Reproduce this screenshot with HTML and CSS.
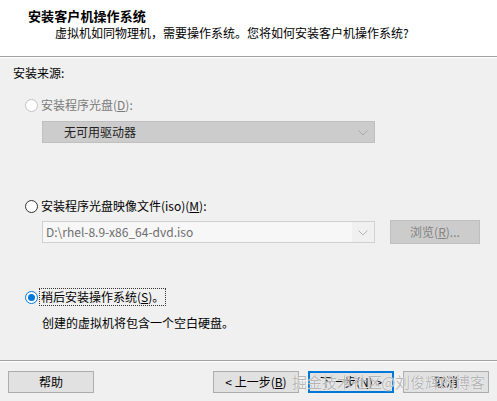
FILE: index.html
```html
<!DOCTYPE html>
<html lang="zh-CN">
<head>
<meta charset="utf-8">
<title>新建虚拟机向导</title>
<link rel="stylesheet" href="styles.css">
</head>
<body>
<div class="wizard">
  <div class="header">
    <div class="title">安装客户机操作系统</div>
    <div class="subtitle">虚拟机如同物理机，需要操作系统。您将如何安装客户机操作系统?</div>
  </div>
  <div class="sep"></div>
  <div class="content">
    <div class="section-label">安装来源:</div>

    <div class="option option-disc disabled">
      <span class="radio"></span>
      <span class="opt-text">安装程序光盘(<u>D</u>):</span>
    </div>
    <div class="select select-disabled">
      <span class="select-text">无可用驱动器</span>
      <span class="chev"><svg width="10" height="6" viewBox="0 0 10 6"><path d="M0.5 0.5 L5 5 L9.5 0.5" fill="none" stroke="#a8a8a8" stroke-width="1"/></svg></span>
    </div>

    <div class="option option-iso">
      <span class="radio"></span>
      <span class="opt-text">安装程序光盘映像文件(iso)(<u>M</u>):</span>
    </div>
    <div class="iso-row">
      <div class="select select-iso">
        <span class="select-text iso-text">D:\rhel-8.9-x86_64-dvd.iso</span>
        <span class="chev"><svg width="10" height="6" viewBox="0 0 10 6"><path d="M0.5 0.5 L5 5 L9.5 0.5" fill="none" stroke="#b4b4b4" stroke-width="1"/></svg></span>
      </div>
      <div class="btn btn-disabled">浏览(<u>R</u>)...</div>
    </div>

    <div class="option option-later">
      <span class="radio checked"></span>
      <span class="opt-text focus">稍后安装操作系统(<u>S</u>)。</span>
    </div>
    <div class="desc">创建的虚拟机将包含一个空白硬盘。</div>
  </div>
  <div class="sep"></div>
  <div class="footer">
    <div class="btn">帮助</div>
    <div class="nav">
      <div class="btn">&lt; 上一步(<u>B</u>)</div>
      <div class="btn btn-default">下一步(<u>N</u>) &gt;</div>
      <div class="btn">取消</div>
    </div>
    <div class="watermark">掘金技术社区 @ 刘俊辉的博客</div>
  </div>
</div>
</body>
</html>
```

FILE: styles.css
```css
* { box-sizing: border-box; }
html, body { margin: 0; padding: 0; }
body {
  width: 497px;
  height: 401px;
  overflow: hidden;
  background: #f0f0f0;
  font-family: "Noto Sans CJK SC", "Microsoft YaHei", sans-serif;
  font-size: 12px;
  line-height: 16px;
  color: #000;
}
u { text-decoration: underline; text-underline-offset: 1px; }

.wizard { width: 497px; height: 401px; }

.header {
  height: 56px;
  background: #fff;
  padding: 7px 0 0 28px;
}
.title { font-size: 13px; font-weight: bold; line-height: 17px; letter-spacing: 0.1px; }
.subtitle { padding-left: 27px; line-height: 17px; }

.sep {
  height: 2px;
  border-top: 1px solid #a0a0a0;
  border-bottom: 1px solid #ffffff;
}

.content {
  height: 302px;
  padding: 7px 0 0 13px;
}
.section-label { line-height: 16px; }

.option {
  display: flex;
  align-items: center;
  height: 16px;
  padding-left: 12px;
}
.option-disc { margin-top: 16px; }
.option-iso { margin-top: 55px; }
.option-later { margin-top: 45px; }

.radio {
  width: 13px;
  height: 13px;
  border-radius: 50%;
  border: 1px solid #333;
  background: #fff;
  flex: none;
  position: relative;
}
.disabled .radio { border-color: #c2c2c2; }
.disabled .opt-text { color: #7a7a7a; }
.radio.checked { border-color: #0078d7; }
.radio.checked::after {
  content: "";
  position: absolute;
  left: 2px; top: 2px;
  width: 7px; height: 7px;
  border-radius: 50%;
  background: #0078d7;
}
.opt-text { margin-left: 3px; }
.opt-text.focus {
  outline: 1px dotted #333;
  outline-offset: 0;
  padding: 0 1px;
  margin-left: 2px;
}

.select {
  display: flex;
  align-items: center;
  height: 22px;
  width: 333px;
  margin-left: 29px;
  border: 1px solid #bfbfbf;
}
.select-disabled {
  margin-top: 8px;
  background: #cccccc;
  color: #222;
}
.select-disabled .select-text { padding-left: 21px; }
.select-text { flex: 1; }
.chev {
  width: 22px;
  display: flex;
  justify-content: center;
  align-items: center;
  padding-top: 1px;
}

.iso-row {
  display: flex;
  align-items: center;
  margin-top: 6px;
  height: 24px;
}
.select-iso {
  background: #f7f7f7;
  border-color: #d0d0d0;
}
.iso-text { padding-left: 3px; color: #6d6d6d; }
.select-iso .chev { background: #f0f0f0; height: 100%; }

.btn {
  width: 86px;
  height: 22px;
  background: #e1e1e1;
  border: 1px solid #adadad;
  display: flex;
  align-items: center;
  justify-content: center;
  flex: none;
}
.btn-disabled {
  width: 90px;
  height: 24px;
  margin-left: 15px;
  background: #cccccc;
  border-color: #bfbfbf;
  color: #838383;
}
.btn-default { border: 2px solid #0078d7; }

.desc { margin-top: 10px; padding-left: 29px; }

.footer {
  position: relative;
  display: flex;
  padding: 9px 8px 0 8px;
}
.nav {
  display: flex;
  gap: 9px;
  margin-left: auto;
}
.watermark {
  position: absolute;
  left: 292px;
  top: 10px;
  font-size: 15px;
  line-height: 20px;
  word-spacing: -4px;
  white-space: nowrap;
  color: rgba(150, 150, 150, 0.7);
  text-shadow: 0 0 1px #fff, 0 0 1px #fff;
}
```
